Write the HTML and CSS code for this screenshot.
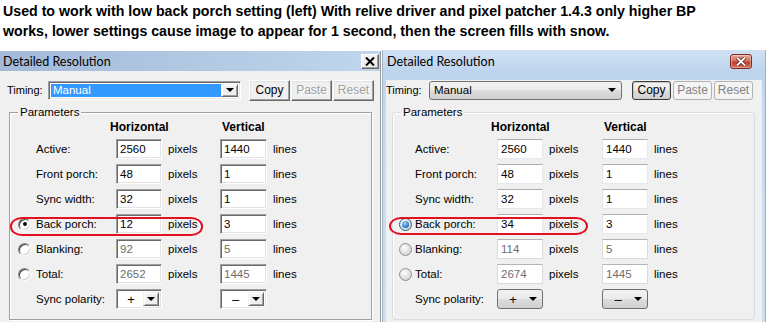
FILE: index.html
```html
<!DOCTYPE html>
<html lang="en">
<head>
    <meta charset="UTF-8">
    <title>Detailed Resolution</title>
    <link rel="stylesheet" href="styles.css">
</head>
<body>
    <!-- Подпись к скриншоту -->
    <p class="caption">Used to work with low back porch setting (left) With relive driver and pixel patcher 1.4.3 only higher BP<br>works, lower settings cause image to appear for 1 second, then the screen fills with snow.</p>

    <div class="windows">
        <!-- Старое окно (классический стиль) -->
        <section class="window classic">
            <header class="titlebar">
                <span class="title">Detailed Resolution</span>
                <span class="close">
                    <svg width="10" height="9" viewBox="0 0 10 9"><path d="M1 0.5 L9 8.5 M9 0.5 L1 8.5" stroke="#000" stroke-width="2"/></svg>
                </span>
            </header>
            <div class="body">
                <div class="timing">
                    <span class="timing-label">Timing:</span>
                    <div class="combo">
                        <span class="combo-value">Manual</span>
                        <span class="combo-arrow"><i class="tri"></i></span>
                    </div>
                    <div class="buttons">
                        <span class="btn">Copy</span>
                        <span class="btn disabled">Paste</span>
                        <span class="btn disabled">Reset</span>
                    </div>
                </div>

                <fieldset class="params">
                    <legend>Parameters</legend>
                    <div class="grid">
                        <span></span><span></span><b class="head">Horizontal</b><span></span><b class="head head-v">Vertical</b><span></span>

                        <span></span><span class="label">Active:</span><span class="field">2560</span><span class="unit">pixels</span><span class="field">1440</span><span class="unit">lines</span>
                        <span></span><span class="label">Front porch:</span><span class="field">48</span><span class="unit">pixels</span><span class="field">1</span><span class="unit">lines</span>
                        <span></span><span class="label">Sync width:</span><span class="field">32</span><span class="unit">pixels</span><span class="field">1</span><span class="unit">lines</span>
                        <span class="radio checked"></span><span class="label">Back porch:</span><span class="field">12</span><span class="unit">pixels</span><span class="field">3</span><span class="unit">lines</span>
                        <span class="radio"></span><span class="label">Blanking:</span><span class="field off">92</span><span class="unit">pixels</span><span class="field off">5</span><span class="unit">lines</span>
                        <span class="radio"></span><span class="label">Total:</span><span class="field off">2652</span><span class="unit">pixels</span><span class="field off">1445</span><span class="unit">lines</span>
                        <span></span><span class="label">Sync polarity:</span>
                        <span class="select"><span class="select-value">+</span><span class="combo-arrow"><i class="tri"></i></span></span><span></span>
                        <span class="select"><span class="select-value">–</span><span class="combo-arrow"><i class="tri"></i></span></span><span></span>

                        <div class="mark"></div>
                    </div>
                </fieldset>
            </div>
        </section>

        <!-- Новое окно (Aero) -->
        <section class="window aero">
            <header class="titlebar">
                <span class="title">Detailed Resolution</span>
                <span class="close">
                    <svg width="12" height="9" viewBox="0 0 12 9"><path d="M2 0.5 L10 8.5 M10 0.5 L2 8.5" stroke="#5a1e16" stroke-width="3.4"/><path d="M2 0.5 L10 8.5 M10 0.5 L2 8.5" stroke="#fff" stroke-width="1.8"/></svg>
                </span>
            </header>
            <div class="body">
                <div class="timing">
                    <span class="timing-label">Timing:</span>
                    <div class="combo">
                        <span class="combo-value">Manual</span>
                        <span class="combo-arrow"><i class="tri"></i></span>
                    </div>
                    <div class="buttons">
                        <span class="btn default">Copy</span>
                        <span class="btn disabled">Paste</span>
                        <span class="btn disabled">Reset</span>
                    </div>
                </div>

                <fieldset class="params">
                    <legend>Parameters</legend>
                    <div class="grid">
                        <span></span><span></span><b class="head">Horizontal</b><span></span><b class="head head-v">Vertical</b><span></span>

                        <span></span><span class="label">Active:</span><span class="field">2560</span><span class="unit">pixels</span><span class="field">1440</span><span class="unit">lines</span>
                        <span></span><span class="label">Front porch:</span><span class="field">48</span><span class="unit">pixels</span><span class="field">1</span><span class="unit">lines</span>
                        <span></span><span class="label">Sync width:</span><span class="field">32</span><span class="unit">pixels</span><span class="field">1</span><span class="unit">lines</span>
                        <span class="radio checked"></span><span class="label">Back porch:</span><span class="field">34</span><span class="unit">pixels</span><span class="field">3</span><span class="unit">lines</span>
                        <span class="radio"></span><span class="label">Blanking:</span><span class="field off">114</span><span class="unit">pixels</span><span class="field off">5</span><span class="unit">lines</span>
                        <span class="radio"></span><span class="label">Total:</span><span class="field off">2674</span><span class="unit">pixels</span><span class="field off">1445</span><span class="unit">lines</span>
                        <span></span><span class="label">Sync polarity:</span>
                        <span class="select"><span class="select-value">+</span><span class="combo-arrow"><i class="tri"></i></span></span><span></span>
                        <span class="select"><span class="select-value">–</span><span class="combo-arrow"><i class="tri"></i></span></span><span></span>

                        <div class="mark"></div>
                    </div>
                </fieldset>
            </div>
        </section>
    </div>
</body>
</html>
```

FILE: styles.css
```css
* {
    margin: 0;
    padding: 0;
    box-sizing: border-box;
}

html, body {
    overflow: hidden;
}

body {
    background: #fff;
    color: #000;
    font-family: 'Liberation Sans', Arial, sans-serif;
    font-size: 11px;
}

/* Подпись */
.caption {
    font-weight: bold;
    font-size: 14.2px;
    line-height: 20px;
    padding: 1px 3px 0;
    white-space: nowrap;
}

.windows {
    display: flex;
    align-items: flex-start;
    margin-top: 9px;
}

/* Окно */
.window {
    background: #f0f0f0;
}

.titlebar {
    display: flex;
    align-items: center;
    justify-content: space-between;
}

.title {
    font-family: 'Lato', 'Open Sans', sans-serif;
    font-size: 12.5px;
    color: #000;
}

.body {
    background: #f0f0f0;
    padding-bottom: 20px;
}

.timing {
    display: flex;
    align-items: center;
    height: 20px;
}

.combo {
    display: flex;
    height: 19px;
    width: 193px;
}

.combo-value {
    flex: 1;
    display: flex;
    align-items: center;
}

.combo-arrow {
    display: flex;
    align-items: center;
    justify-content: center;
}

.tri {
    width: 0;
    height: 0;
    border-left: 4px solid transparent;
    border-right: 4px solid transparent;
    border-top: 4px solid #000;
}

.buttons {
    display: flex;
}

.btn {
    display: flex;
    align-items: center;
    justify-content: center;
    font-size: 12px;
}

.params {
    border: 1px solid #d5dfe5;
    margin-top: 5px;
    padding: 1px 0 10px;
}

.params legend {
    margin-left: 8px;
    padding: 0 2px;
    font-size: 11.5px;
    line-height: 14px;
}

.grid {
    position: relative;
    display: grid;
    grid-template-rows: 14px;
    grid-auto-rows: 20px;
    row-gap: 5px;
    align-items: center;
}

.head {
    font-size: 12px;
    margin-left: -6px;
    white-space: nowrap;
}

.head.head-v {
    margin-left: 2px;
}

.label {
    font-size: 11.5px;
}

.unit {
    font-size: 11.5px;
    padding-left: 6px;
}

.field {
    height: 20px;
    background: #fff;
    display: flex;
    align-items: center;
    padding-left: 2px;
    font-size: 11.5px;
}

.field.off {
    color: #6d6d6d;
}

.select {
    display: flex;
    height: 20px;
}

.select-value {
    flex: 1;
    display: flex;
    align-items: center;
    justify-content: center;
    font-size: 13px;
}

.radio {
    width: 13px;
    height: 13px;
    border-radius: 50%;
    display: flex;
    align-items: center;
    justify-content: center;
}

/* Красная пометка */
.mark {
    position: absolute;
    top: 97px;
    height: 19px;
    border: 2px solid #e3101f;
    border-radius: 12px / 9px;
}

/* ---------- Классический стиль ---------- */
.classic {
    width: 381px;
    margin-top: 1px;
    border-right: 1px solid #9a9a9a;
}

.classic .titlebar {
    height: 20px;
    padding: 0 1px 0 3px;
    background: linear-gradient(to right, #a2bad8, #c0d6ee);
}

.classic .close {
    width: 18px;
    height: 15px;
    display: flex;
    align-items: center;
    justify-content: center;
    background: #f0f0f0;
    border: 1px solid;
    border-color: #fff #696969 #696969 #fff;
    box-shadow: inset -1px -1px 0 #a0a0a0;
}

.classic .body {
    padding-left: 7px;
}

.classic .timing {
    margin-top: 9px;
}

.classic .timing-label {
    width: 41px;
}

.classic .combo,
.classic .field,
.classic .select {
    border: 1px solid;
    border-color: #a0a0a0 #fff #fff #a0a0a0;
    box-shadow: inset 1px 1px 0 #696969, inset -1px -1px 0 #e3e3e3;
    background: #fff;
}

.classic .combo {
    padding: 2px;
}

.classic .combo-value {
    background: #3399ff;
    color: #fff;
    padding-left: 2px;
    font-size: 11.5px;
}

.classic .combo-arrow {
    width: 17px;
    background: #f0f0f0;
    border: 1px solid;
    border-color: #f0f0f0 #696969 #696969 #f0f0f0;
    box-shadow: inset 1px 1px 0 #fff, inset -1px -1px 0 #a0a0a0;
}

.classic .select {
    padding: 2px;
}

.classic .select .combo-arrow {
    width: 16px;
}

.classic .buttons {
    margin-left: 8px;
    gap: 1px;
}

.classic .btn {
    width: 41px;
    height: 21px;
    background: #f0f0f0;
    border: 1px solid;
    border-color: #fff #696969 #696969 #fff;
    box-shadow: inset -1px -1px 0 #a0a0a0, inset 1px 1px 0 #e3e3e3;
}

.classic .btn.disabled {
    color: #a0a0a0;
    text-shadow: 1px 1px 0 #fff;
}

.classic .params {
    margin-left: 2px;
    width: 363px;
    border-color: #a0a0a0;
    box-shadow: inset 1px 1px 0 #fff, 1px 1px 0 #fff;
}

.classic .grid {
    padding-left: 8px;
    grid-template-columns: 18px 80px 46px 58px 47px auto;
}

.classic .field {
    padding-left: 3px;
}

.classic .radio {
    background: #fff;
    border: 1px solid;
    border-color: #808080 #fff #fff #808080;
    box-shadow: inset 1px 1px 0 #404040, inset -1px -1px 0 #d4d0c8;
}

.classic .radio.checked::after {
    content: '';
    width: 4px;
    height: 4px;
    border-radius: 50%;
    background: #000;
}

.classic .mark {
    left: 0;
    width: 193px;
}

/* ---------- Стиль Aero ---------- */
.aero {
    width: 384px;
    margin-left: 1px;
    border-left: 1px solid #9fb1c6;
    border-right: 1px solid #8fb2d8;
    padding: 0 3px;
    background: linear-gradient(#d0e1f4, #bdd4ed 22px, #c6daf0 60px, #cddff2);
}

.aero .titlebar {
    height: 22px;
    padding: 0 10px 0 1px;
}

.aero .close {
    width: 22px;
    height: 15px;
    display: flex;
    align-items: center;
    justify-content: center;
    border: 1px solid #7b2a1f;
    border-radius: 3px;
    background: linear-gradient(#e9a99b, #d2705f 45%, #c0402e 55%, #d4735c);
    box-shadow: inset 0 0 0 1px rgba(255, 255, 255, 0.35);
}

.aero .timing {
    margin-top: 8px;
}

.aero .timing-label {
    width: 43px;
}

.aero .combo,
.aero .select,
.aero .btn {
    border: 1px solid #707070;
    border-radius: 3px;
    background: linear-gradient(#f2f2f2, #ebebeb 50%, #dddddd 50%, #cfcfcf);
}

.aero .combo-value {
    padding-left: 4px;
    font-size: 11.5px;
}

.aero .combo .combo-arrow {
    width: 18px;
}

.aero .select .combo-arrow {
    width: 18px;
}

.aero .select .select-value {
    padding-left: 4px;
}

.aero .buttons {
    margin-left: 10px;
    gap: 2px;
}

.aero .btn {
    width: 39px;
    height: 19px;
}

.aero .btn.default {
    border-color: #3c3c3c;
    box-shadow: inset 0 0 0 1px #c9c9c9;
}

.aero .btn.disabled {
    border-color: #adb2b5;
    background: #f4f4f4;
    color: #838383;
}

.aero .params {
    margin-left: 6px;
    width: 363px;
    border-radius: 3px;
    box-shadow: inset 1px 1px 0 #fff;
}

.aero .grid {
    padding-left: 6px;
    grid-template-columns: 16px 82px 46px 59px 46px auto;
}

.aero .field {
    border: 1px solid;
    border-color: #abadb3 #e3e9ef #e3e9ef #e2e3ea;
    padding-left: 3px;
}

.aero .field.off {
    border-color: #b4b4b4 #dadada #dadada #dadada;
}

.aero .radio {
    border: 1px solid #8f8f8f;
    background: radial-gradient(circle at 40% 35%, #fdfdfd, #dcdcdc 60%, #c8c8c8);
}

.aero .radio.checked {
    border-color: #2c628b;
}

.aero .radio.checked::after {
    content: '';
    width: 7px;
    height: 7px;
    border-radius: 50%;
    background: radial-gradient(circle at 40% 35%, #a6d7ff, #3c8fd6 50%, #0b3f78);
}

.aero .mark {
    left: -4px;
    width: 199px;
    height: 18px;
}
```
